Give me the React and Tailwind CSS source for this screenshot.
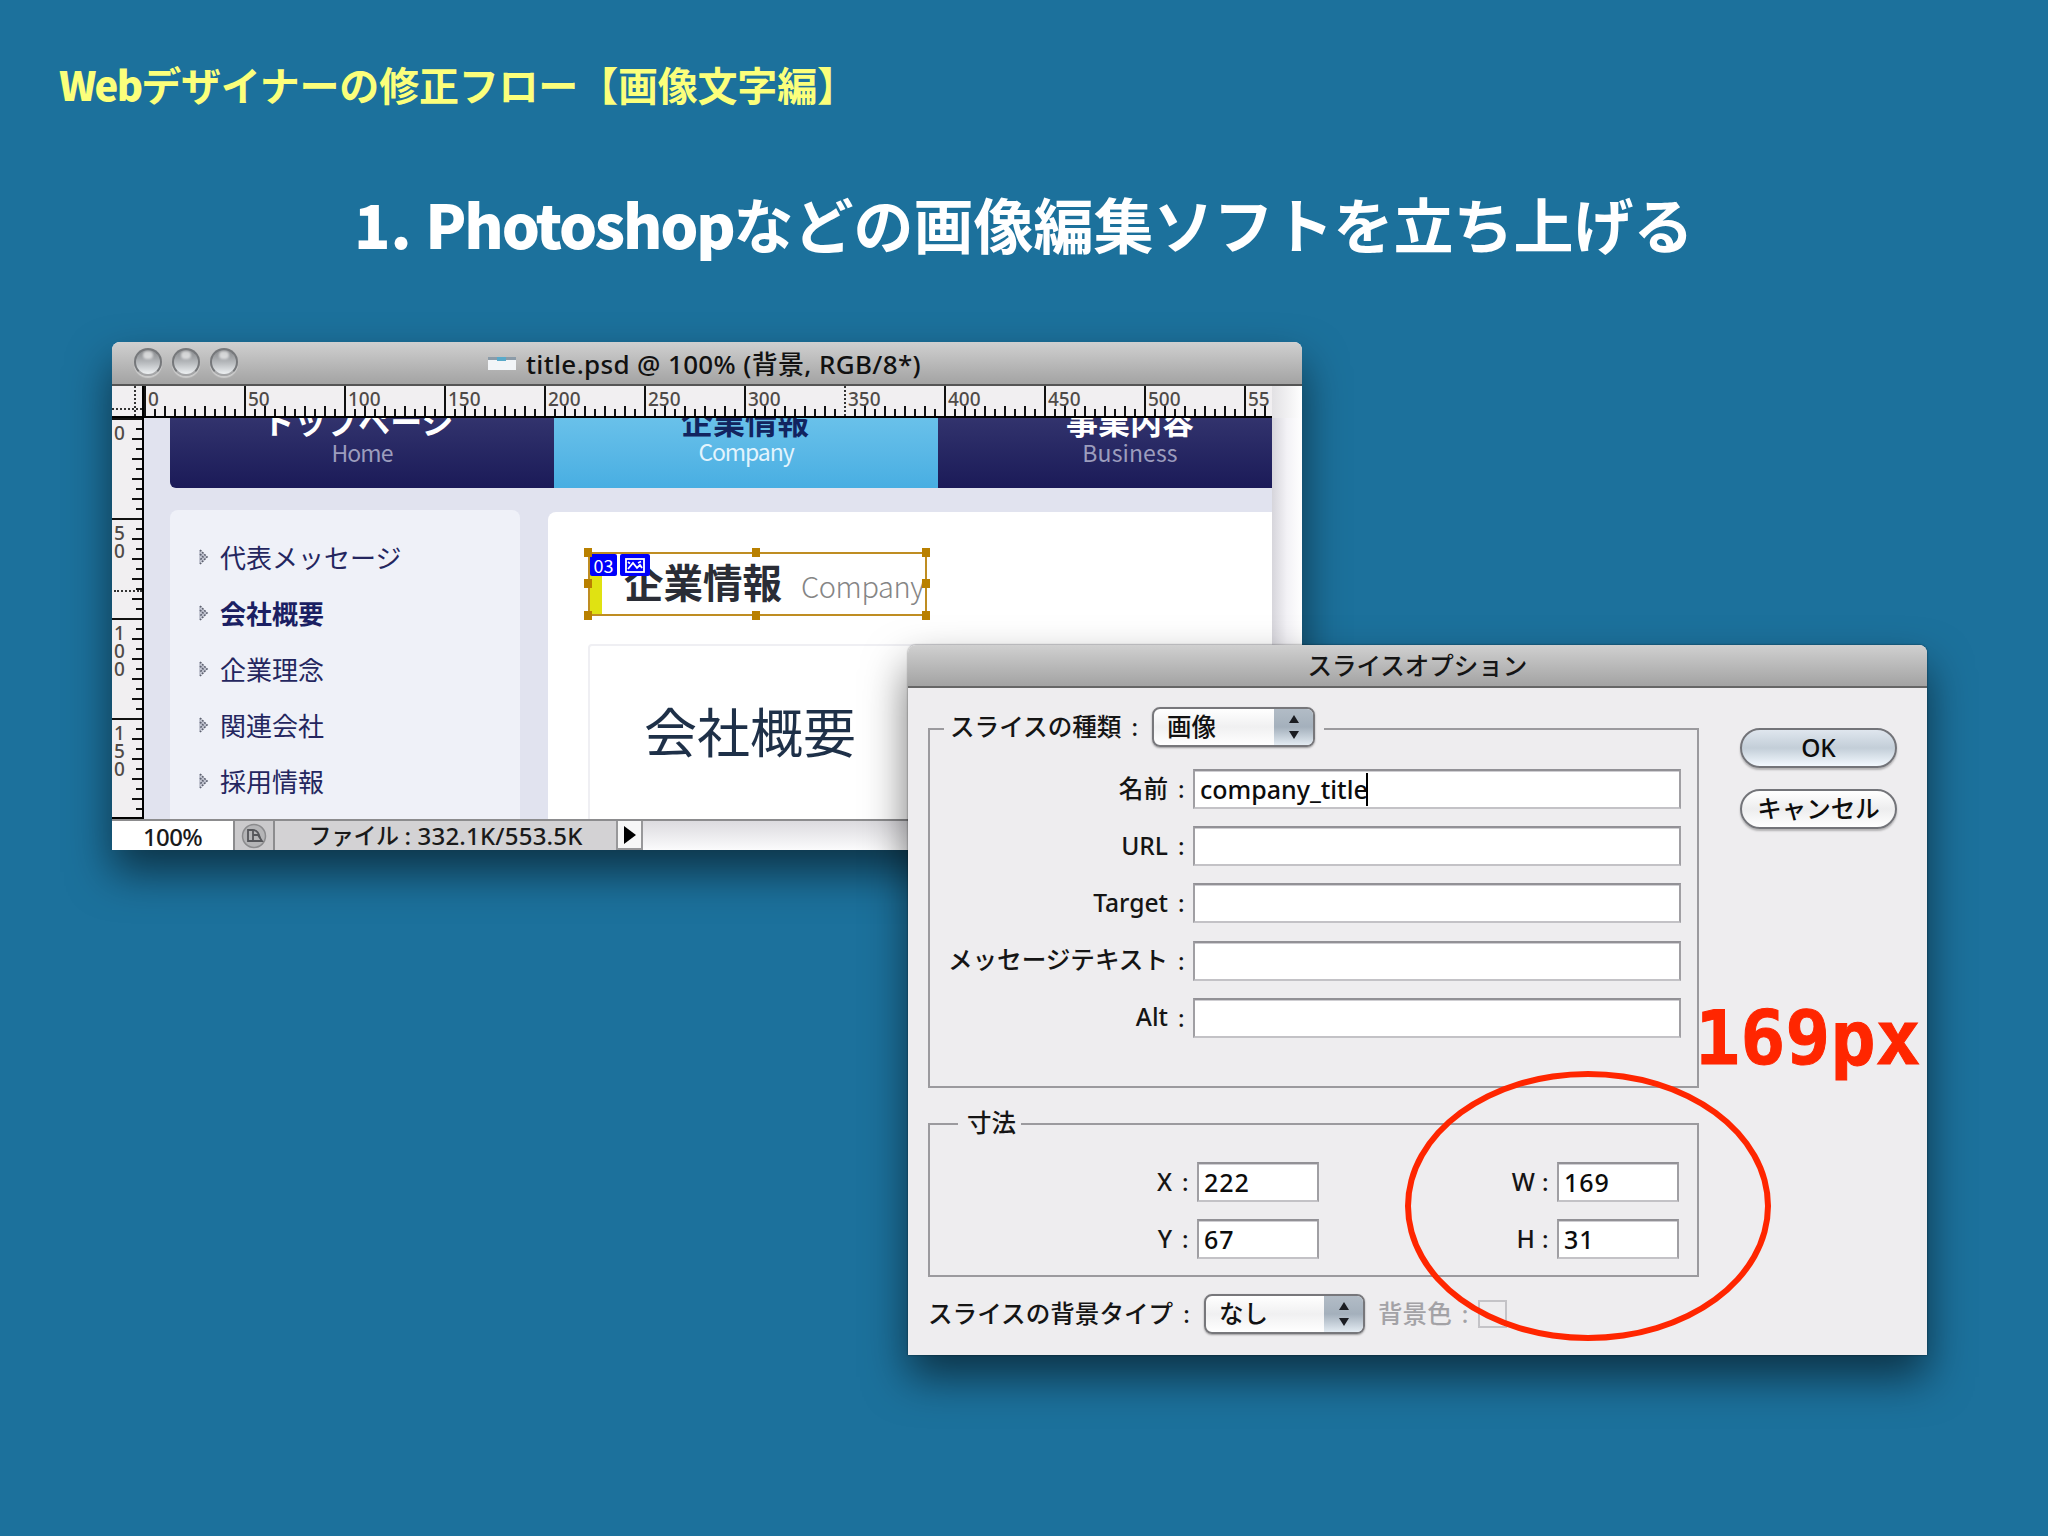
import React from 'react';

const hLabels = [0, 50, 100, 150, 200, 250, 300, 350, 400, 450, 500, 55];
const vLabels = ['0', '50', '100', '150'];
const ticks = [0, 1, 2, 3, 4, 5, 6, 7, 8, 9];

const menuItems = [
  { label: '代表メッセージ' },
  { label: '会社概要', active: true },
  { label: '企業理念' },
  { label: '関連会社' },
  { label: '採用情報' },
];

const fields = [
  { label: '名前', value: 'company_title' },
  { label: 'URL' },
  { label: 'Target' },
  { label: 'メッセージテキスト' },
  { label: 'Alt' },
];

const TrafficLight = () => (
  <div className="relative h-[28px] w-[28px] overflow-hidden rounded-full border-2 border-[#76787b] border-b-[#a5a6a8] bg-linear-to-b from-[#85878a] via-[#b4b7ba] to-[#eef1f3] shadow-[0_2px_1px_rgba(255,255,255,0.4)]">
    <div className="absolute left-[7px] top-[1px] h-[8px] w-[10px] rounded-full bg-white/60 blur-[1px]" />
  </div>
);

const HorizontalRuler = () => (
  <div className="flex h-[32px] w-[1128px] overflow-hidden border-b-2 border-black bg-[#f1eff1]">
    {hLabels.map((n, i) => (
      <div
        key={n + '-' + i}
        className={`relative flex h-full w-[100px] shrink-0 items-end border-l-[2px] ${n === 350 ? 'border-dotted border-[#333]' : 'border-[#111]'}`}
      >
        <span className="absolute left-[2px] top-[3px] text-[19px] font-medium leading-[20px] text-[#4f4a47]">{n}</span>
        {ticks.slice(1).map((t) => (
          <div
            key={t}
            className={`relative ml-[8px] w-[2px] shrink-0 bg-[#111] ${t % 2 ? 'h-[7px]' : 'h-[10px]'}`}
          />
        ))}
      </div>
    ))}
  </div>
);

const VerticalRuler = () => (
  <div className="relative flex h-[401px] w-[32px] shrink-0 flex-col overflow-hidden border-b-2 border-r-2 border-black bg-[#f1eff1]">
    {vLabels.map((n) => (
      <div key={n} className="relative flex h-[100px] w-full shrink-0 flex-col items-end border-t-2 border-[#111]">
        <div className="absolute left-[2px] top-[4px] flex flex-col">
          {n.split('').map((d, i) => (
            <span key={i} className="text-[19px] font-medium leading-[18px] text-[#4f4a47]">{d}</span>
          ))}
        </div>
        {ticks.slice(1).map((t) => (
          <div key={t} className={`relative mt-[8px] h-[2px] shrink-0 bg-[#111] ${t % 2 ? 'w-[6px]' : 'w-[10px]'}`} />
        ))}
      </div>
    ))}
    <div className="absolute left-[2px] top-[172px] w-[28px] border-t-2 border-dotted border-[#333]" />
  </div>
);

const Bullet = () => (
  <svg width="10" height="16" viewBox="0 0 10 16" className="shrink-0">
    <path d="M0 1l8 7-8 7z" fill="#c3c6d2" />
    <path d="M1 1l7 7-7 7M1 5l3 3-3 3" fill="none" stroke="#5d6170" strokeWidth="1.6" strokeDasharray="2 1" />
  </svg>
);

const Handle = ({ className }) => <div className={`absolute h-[9px] w-[8px] bg-[#b98000] ${className}`} />;

const SliceTitle = () => (
  <div className="relative flex h-[64px] w-[339px] border-2 border-[#bf8d22]">
    <div className="h-full w-[12px] shrink-0 bg-[#e0e212]" />
    <div className="ml-[22px] flex items-center whitespace-nowrap">
      <span className="-mt-[6px] text-[39.5px] font-bold leading-none text-[#2a2d36]">企業情報</span>
      <span className="ml-[19px] mt-[3px] text-[29px] font-light leading-none tracking-[-0.4px] text-[#858585]">Company</span>
    </div>
    <div className="absolute left-0 top-0 flex gap-[3px]">
      <div className="flex h-[22px] w-[27px] items-center justify-center rounded-[2px] bg-[#0000fb] text-[18px] leading-none text-white">03</div>
      <div className="flex h-[22px] w-[30px] items-center justify-center rounded-[2px] bg-[#0000fb]">
        <svg width="20" height="15" viewBox="0 0 20 15" fill="none" stroke="#fff" strokeWidth="1.8">
          <rect x="1" y="1" width="18" height="13" />
          <path d="M3 11l5-6 4 5 3-3 2 3M3 4l2 1.5M13 5l3-1.5" />
        </svg>
      </div>
    </div>
    <Handle className="-left-[6px] -top-[6px]" />
    <Handle className="-left-[6px] top-[25px]" />
    <Handle className="-bottom-[6px] -left-[6px]" />
    <Handle className="-top-[6px] left-[162px]" />
    <Handle className="-bottom-[6px] left-[162px]" />
    <Handle className="-right-[5px] -top-[6px]" />
    <Handle className="-right-[5px] top-[25px]" />
    <Handle className="-bottom-[6px] -right-[5px]" />
  </div>
);

const NavTab = ({ title, sub, className, titleClass, subClass }) => (
  <div className={`flex h-full shrink-0 flex-col items-center whitespace-nowrap ${className}`}>
    <div className={`-mt-[16px] text-[32px] font-bold leading-[36px] ${titleClass}`}>{title}</div>
    <div className={`text-[23px] leading-[28px] ${subClass}`}>{sub}</div>
  </div>
);

const Canvas = () => (
  <div className="h-[401px] w-[1128px] overflow-hidden bg-[#e1e3ef] font-['Noto_Sans_CJK_JP',sans-serif]">
    <div className="ml-[26px] flex h-[70px] overflow-hidden rounded-bl-[6px]">
      <NavTab
        title="トップページ"
        sub="Home"
        className="w-[384px] bg-linear-to-b from-[#32336d] to-[#1b1a58]"
        titleClass="text-white mr-[8px]"
        subClass="text-[#9c9dbd] tracking-[-0.9px]"
      />
      <NavTab
        title="企業情報"
        sub="Company"
        className="w-[384px] bg-linear-to-b from-[#69c1ea] to-[#48aee2]"
        titleClass="text-[#12245f] mr-[2px]"
        subClass="text-[#e3f4fd] tracking-[-1.1px] -mt-[1px]"
      />
      <NavTab
        title="事業内容"
        sub="Business"
        className="w-[384px] bg-linear-to-b from-[#32336d] to-[#1b1a58]"
        titleClass="text-white"
        subClass="text-[#9c9dbd] tracking-[0.1px]"
      />
    </div>
    <div className="flex items-start pl-[26px] pt-[22px]">
      <div className="flex h-[320px] w-[350px] shrink-0 flex-col rounded-t-[8px] bg-[#eff1f8] pl-[29px] pt-[19px]">
        {menuItems.map((item) => (
          <div key={item.label} className="flex h-[56px] items-center gap-[11px]">
            <Bullet />
            <span className={`text-[26px] leading-none ${item.active ? 'font-bold text-[#1b1f63]' : 'text-[#24265f]'}`}>
              {item.label}
            </span>
          </div>
        ))}
      </div>
      <div className="ml-[28px] mt-[2px] h-[320px] w-[724px] shrink-0 rounded-tl-[8px] bg-white pl-[40px] pt-[40px]">
        <SliceTitle />
        <div className="mt-[28px] h-[220px] w-[700px] rounded-tl-[4px] border-2 border-[#efeff3] pl-[54px] pt-[58px]">
          <div className="text-[53px] leading-none text-[#1e3048]">会社概要</div>
        </div>
      </div>
    </div>
  </div>
);

const StatusBar = () => (
  <div className="flex h-[31px] w-full border-t-2 border-[#8c8c8e] bg-[#d3d2d4]">
    <div className="flex w-[121px] items-center justify-center bg-white text-[24px] leading-none text-[#1a1a1a]">
      <span className="mt-[2px] tracking-[-0.7px]">100%</span>
    </div>
    <div className="flex w-[42px] items-center justify-center border-x-2 border-[#8c8c8e] bg-[#cbcacc]">
      <svg width="26" height="26" viewBox="0 0 26 26">
        <circle cx="13" cy="13" r="11.5" fill="#b5b5b7" stroke="#8b8b8d" strokeWidth="1.5" />
        <path d="M12 18H7V7h5c4 0 6 3 7 8" fill="none" stroke="#55565a" strokeWidth="1.8" />
        <path d="M12 8v10h9l-4-6h-5" fill="none" stroke="#55565a" strokeWidth="1.8" />
      </svg>
    </div>
    <div className="flex w-[341px] items-center justify-center whitespace-nowrap leading-none text-[#1a1a1a]">
      <span className="text-[23px] tracking-[-0.5px]">ファイル</span>
      <span className="ml-[6px] text-[24px] tracking-[0.2px]">: 332.1K/553.5K</span>
    </div>
    <div className="flex w-[27px] items-center justify-center border-2 border-t-0 border-[#98989a] bg-[#f7f7f7]">
      <svg width="12" height="18" viewBox="0 0 12 18">
        <path d="M0 0l12 9-12 9z" fill="#000" />
      </svg>
    </div>
    <div className="flex-1 bg-linear-to-b from-[#dcdbdf] to-[#fbfbfc]" />
  </div>
);

const PhotoshopWindow = () => (
  <div className="absolute left-[112px] top-[342px] flex h-[508px] w-[1190px] flex-col overflow-hidden rounded-t-[8px] bg-[#f6f5f8] font-medium">
    <div className="flex h-[44px] shrink-0 items-center border-b-2 border-[#555] bg-linear-to-b from-[#d0d0d0] to-[#a3a3a3] pl-[22px]">
      <div className="-mt-[2px] flex gap-[10px]">
        <TrafficLight />
        <TrafficLight />
        <TrafficLight />
      </div>
      <svg width="28" height="13" viewBox="0 0 28 13" className="ml-[250px]">
        <rect width="28" height="13" fill="#f2f5f8" />
        <rect width="28" height="3" fill="#8b9ba8" />
        <rect x="9" width="9" height="4" fill="#58a9c9" />
      </svg>
      <div className="ml-[10px] mt-[2px] whitespace-nowrap text-[26px] leading-none tracking-[0.35px] text-[#111]">
        title.psd @ 100% (背景, RGB/8*)
      </div>
    </div>
    <div className="flex shrink-0">
      <div className="relative h-[32px] w-[32px] border-b-2 border-r-2 border-black bg-[#f1eff1]">
        <div className="absolute left-[22px] top-0 h-full border-l-2 border-dotted border-[#333]" />
        <div className="absolute left-0 top-[22px] w-full border-t-2 border-dotted border-[#333]" />
      </div>
      <HorizontalRuler />
      <div className="h-[32px] w-[30px] bg-linear-to-r from-[#e2e1e4] to-white" />
    </div>
    <div className="flex shrink-0 font-normal">
      <VerticalRuler />
      <Canvas />
      <div className="h-[401px] w-[30px] bg-linear-to-r from-[#d6d5db] via-[#f3f2f6] to-white" />
    </div>
    <StatusBar />
  </div>
);

const SelectBox = ({ value, className }) => (
  <div className={`flex h-[40px] overflow-hidden rounded-[8px] border-2 border-[#77777b] bg-linear-to-b from-white via-[#f0f0f1] to-white shadow-[0_1px_2px_rgba(0,0,0,0.35)] ${className}`}>
    <div className="flex flex-1 items-center pl-[13px] text-[24.5px] leading-none text-[#111]">{value}</div>
    <div className="flex w-[39px] items-center justify-center bg-linear-to-b from-[#b2bcc6] via-[#a4b0bc] to-[#e3ebf2]">
      <svg width="10" height="24" viewBox="0 0 10 24">
        <path d="M5 0l5 8H0zM5 24l5-8H0z" fill="#1b1d22" />
      </svg>
    </div>
  </div>
);

const TextField = ({ value, caret, className, textClass }) => (
  <div className={`flex h-[40px] items-center border-2 border-[#a09fa3] border-b-[#c3c2c6] border-t-[#929196] bg-white pl-[5px] shadow-[inset_0_1px_0_#cfced2] ${className}`}>
    <span className={`text-[25px] leading-none text-[#0c0c0c] ${textClass}`}>{value}</span>
    {caret && <div className="-ml-[2px] h-[33px] w-[2px] bg-black" />}
  </div>
);

const Label = ({ children, className, colonClass = 'ml-[10px]' }) => (
  <div className={`flex items-center justify-end whitespace-nowrap text-[24.6px] leading-none ${className}`}>
    <span>{children}</span>
    <span className={`w-[8px] text-[24px] ${colonClass}`}>:</span>
  </div>
);

const AquaButton = ({ children, className }) => (
  <button className={`flex h-[40px] w-[157px] items-center justify-center rounded-full border-2 border-[#737479] text-[24.5px] leading-none text-[#0c0c0c] shadow-[0_2px_2px_rgba(0,0,0,0.25)] ${className}`}>
    {children}
  </button>
);

const Coordinates = ({ items, className, colonClass }) => (
  <div className={`flex flex-col gap-[17px] ${className}`}>
    {items.map(([label, value]) => (
      <div key={label} className="flex justify-end">
        <Label className="mr-[7px]" colonClass={colonClass}>{label}</Label>
        <TextField value={value} className="w-[122px]" textClass="tracking-[0.9px]" />
      </div>
    ))}
  </div>
);

const SliceDialog = () => (
  <div className="absolute left-[908px] top-[645px] h-[710px] w-[1019px] overflow-hidden rounded-t-[8px] bg-[#eeedef] font-medium text-[#151515]">
    <div className="flex h-[43px] items-center justify-center border-b-2 border-[#666] bg-linear-to-b from-[#d0d0d0] to-[#a3a3a3] pt-[2px] text-[24.5px] leading-none">
      スライスオプション
    </div>
    <div className="flex pl-[20px] pt-[40px]">
      <div className="w-[771px]">
        <div className="h-[360px] border-2 border-[#9b9a9e]">
          <div className="-mt-[23px] ml-[14px] flex h-[40px] w-[380px] items-center bg-[#eeedef] pl-[6px]">
            <Label className="w-[189px]">スライスの種類</Label>
            <SelectBox value="画像" className="ml-[13px] w-[163px]" />
          </div>
          <div className="mt-[22px] flex flex-col gap-[17.2px]">
            {fields.map((f, i) => (
              <div key={f.label} className="flex">
                <Label className="w-[256px]">{f.label}</Label>
                <TextField value={f.value} caret={i === 0} className="ml-[7px] w-[488px]" />
              </div>
            ))}
          </div>
        </div>
        <div className="mt-[35px] h-[154px] border-2 border-[#9b9a9e]">
          <div className="-mt-[15px] ml-[28px] flex h-[26px] w-[63px] items-center bg-[#eeedef] pl-[9px] text-[24.5px] leading-none">
            寸法
          </div>
          <div className="mt-[26px] flex">
            <Coordinates items={[['X', '222'], ['Y', '67']]} className="w-[389px]" />
            <Coordinates items={[['W', '169'], ['H', '31']]} className="w-[360px]" colonClass="ml-[7px]" />
          </div>
        </div>
        <div className="mt-[17px] flex h-[40px] items-center">
          <Label className="w-[263px]">スライスの背景タイプ</Label>
          <SelectBox value="なし" className="ml-[13px] w-[161px]" />
          <Label className="ml-[13px] text-[#a3a2a6]">背景色</Label>
          <div className="ml-[8px] h-[28px] w-[29px] border-2 border-[#c4c3c7]" />
        </div>
      </div>
      <div className="ml-[41px] flex flex-col gap-[21px]">
        <AquaButton className="bg-linear-to-b from-[#dfe6ee] via-[#c3ced8] to-[#f3f9ff]">OK</AquaButton>
        <AquaButton className="bg-linear-to-b from-white via-[#ededee] to-white">キャンセル</AquaButton>
      </div>
    </div>
  </div>
);

const App = () => {
  return (
    <div className="relative h-[1536px] w-[2048px] overflow-hidden bg-[#1c719c] font-['Noto_Sans','Noto_Sans_CJK_JP',sans-serif]">
      <div className="whitespace-nowrap pl-[59px] pt-[54px] font-['Noto_Sans_CJK_JP',sans-serif] text-[40px] font-bold leading-[60px] text-[#fbff7b]">
        <span className="font-black tracking-[-1.8px]">Web</span>
        <span className="tracking-[-0.2px]">デザイナーの修正フロー【画像文字編】</span>
      </div>
      <h1 className="mt-[49px] whitespace-nowrap pl-[354px] font-['Noto_Sans_CJK_JP',sans-serif] text-[60px] font-bold leading-[120px] text-white">
        <span className="font-black">1. </span>
        <span className="font-black tracking-[-2.2px]">Photoshop</span>
        <span>などの画像編集ソフトを立ち上げる</span>
      </h1>

      {/* soft shadows sit under both windows */}
      <div className="absolute left-[112px] top-[342px] h-[508px] w-[1190px] rounded-t-[8px] shadow-[0_22px_44px_rgba(0,0,0,0.55)]" />
      <PhotoshopWindow />
      <div className="absolute left-[908px] top-[645px] h-[710px] w-[1019px] rounded-t-[8px] shadow-[0_22px_44px_rgba(0,0,0,0.55),0_0_2px_rgba(0,0,0,0.6)]" />
      <SliceDialog />

      <div className="absolute left-[1695px] top-[994px] font-['DejaVu_Sans_Mono',monospace] text-[75px] font-bold leading-[88px] text-[#ff2600] [-webkit-text-stroke:1px_#ff2600]">
        169px
      </div>
      <div className="absolute left-[1405px] top-[1071px] h-[270px] w-[366px] rounded-[50%] border-[6px] border-[#ff2600]" />
    </div>
  );
};

export default App;
